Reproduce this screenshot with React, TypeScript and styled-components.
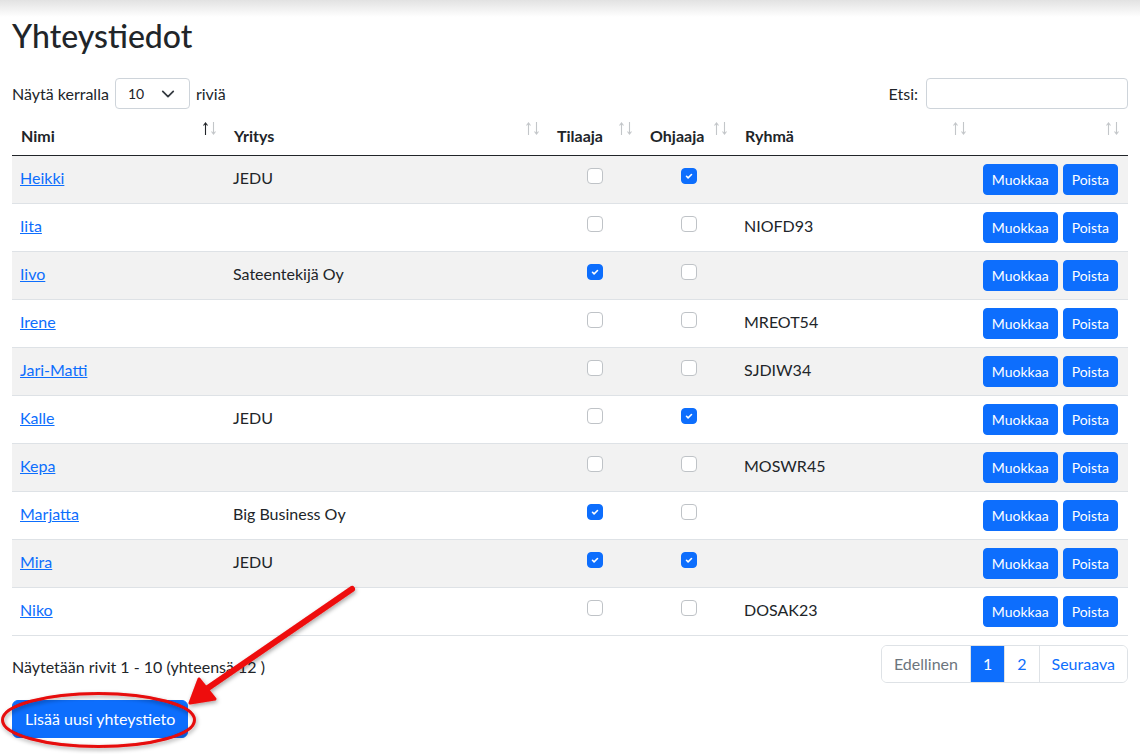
import React from "react";
import styled, { createGlobalStyle } from "styled-components";

const Global = createGlobalStyle`
  html, body { margin: 0; padding: 0; background: #fff; }
  body {
    font-family: "Lato", "Liberation Sans", sans-serif;
    color: #212529;
    font-size: 16px;
    line-height: 1.5;
  }
  * { box-sizing: border-box; }
`;

const Page = styled.div`
  position: relative;
  width: 1140px;
  min-height: 754px;
  overflow: hidden;
`;

const TopShade = styled.div`
  height: 17px;
  background: linear-gradient(#e2e2e2, #ffffff);
`;

const Container = styled.div`
  padding: 0 12px;
`;

const Title = styled.h2`
  margin: 0 0 23px;
  font-size: 32px;
  font-weight: 500;
  line-height: 38px;
`;

const Controls = styled.div`
  display: flex;
  justify-content: space-between;
  align-items: center;
  height: 31px;
  margin-bottom: 7px;
`;

const Label = styled.label`
  display: flex;
  align-items: center;
  gap: 6px;
  font-size: 16px;
`;

const SelectBox = styled.div`
  width: 75px;
  height: 31px;
  border: 1px solid #ced4da;
  border-radius: 4px;
  display: flex;
  align-items: center;
  justify-content: space-between;
  padding: 0 14px 0 12px;
  font-size: 14px;
`;

const SearchInput = styled.input`
  width: 202px;
  height: 31px;
  border: 1px solid #ced4da;
  border-radius: 4px;
  font: inherit;
  padding: 0 8px;
  margin-left: 2px;
`;

const Table = styled.table`
  width: 100%;
  border-collapse: collapse;
  table-layout: fixed;
`;

const Th = styled.th`
  position: relative;
  text-align: left;
  font-weight: 700;
  padding: 8px 8px 7px 9px;
  line-height: 24px;
  border-bottom: 1px solid #212529;
`;

const SortIcon = styled.span`
  position: absolute;
  right: 9px;
  top: 6px;
  display: flex;
  gap: 3px;
`;

const Tr = styled.tr<{ $striped: boolean }>`
  background: ${(p) => (p.$striped ? "#f2f2f2" : "#fff")};
`;

const Td = styled.td<{ $center?: boolean }>`
  padding: ${(p) => (p.$center ? "8px" : "10px 8px 8px")};
  line-height: 24px;
  vertical-align: top;
  border-bottom: 1px solid #dee2e6;
  text-align: ${(p) => (p.$center ? "center" : "left")};
`;

const ActionTd = styled.td`
  padding: 8px;
  vertical-align: top;
  border-bottom: 1px solid #dee2e6;
`;

const NameLink = styled.a`
  color: #0d6efd;
  text-decoration: underline;
  cursor: pointer;
`;

const CheckBox = styled.span<{ $checked: boolean }>`
  display: inline-flex;
  align-items: center;
  justify-content: center;
  width: 16px;
  height: 16px;
  margin-top: 4px;
  vertical-align: top;
  border-radius: 4px;
  border: 1px solid ${(p) => (p.$checked ? "#0d6efd" : "#bfc3c7")};
  background: ${(p) => (p.$checked ? "#0d6efd" : "#fff")};
`;

const Actions = styled.div`
  display: flex;
  justify-content: flex-end;
  gap: 5px;
  padding-right: 2px;
`;

const SmallButton = styled.button`
  height: 31px;
  padding: 0 8px;
  font: inherit;
  font-size: 14px;
  color: #fff;
  background: #0d6efd;
  border: 1px solid #0d6efd;
  border-radius: 4px;
`;

const Footer = styled.div`
  display: flex;
  justify-content: space-between;
  align-items: center;
  margin-top: 9px;
`;

const Info = styled.div`
  font-size: 16px;
  padding-top: 6px;
`;

const Pagination = styled.div`
  display: flex;
  height: 38px;
  border: 1px solid #dee2e6;
  border-radius: 6px;
  overflow: hidden;
`;

const PageItem = styled.span<{ $active?: boolean; $disabled?: boolean }>`
  display: flex;
  align-items: center;
  padding: 0 12px;
  font-size: 16px;
  color: ${(p) => (p.$active ? "#fff" : p.$disabled ? "#6c757d" : "#0d6efd")};
  background: ${(p) => (p.$active ? "#0d6efd" : "#fff")};
  & + & {
    border-left: 1px solid #dee2e6;
  }
`;

const AddButton = styled.button`
  margin-top: 17px;
  height: 38px;
  padding: 0 12px;
  font: inherit;
  font-size: 16px;
  color: #fff;
  background: #0d6efd;
  border: 1px solid #0d6efd;
  border-radius: 6px;
`;

const Overlay = styled.svg`
  position: absolute;
  left: 0;
  top: 0;
  pointer-events: none;
`;

type Row = { name: string; company: string; sub: boolean; guide: boolean; group: string };

const rows: Row[] = [
  { name: "Heikki", company: "JEDU", sub: false, guide: true, group: "" },
  { name: "Iita", company: "", sub: false, guide: false, group: "NIOFD93" },
  { name: "Iivo", company: "Sateentekijä Oy", sub: true, guide: false, group: "" },
  { name: "Irene", company: "", sub: false, guide: false, group: "MREOT54" },
  { name: "Jari-Matti", company: "", sub: false, guide: false, group: "SJDIW34" },
  { name: "Kalle", company: "JEDU", sub: false, guide: true, group: "" },
  { name: "Kepa", company: "", sub: false, guide: false, group: "MOSWR45" },
  { name: "Marjatta", company: "Big Business Oy", sub: true, guide: false, group: "" },
  { name: "Mira", company: "JEDU", sub: true, guide: true, group: "" },
  { name: "Niko", company: "", sub: false, guide: false, group: "DOSAK23" },
];

const Check = ({ checked }: { checked: boolean }) => (
  <CheckBox $checked={checked}>
    {checked && (
      <svg width="10" height="10" viewBox="0 0 20 20">
        <path d="M5 10.5l3.2 3.2L15 7" fill="none" stroke="#fff" strokeWidth="3.2" strokeLinecap="round" strokeLinejoin="round" />
      </svg>
    )}
  </CheckBox>
);

const Sort = ({ active }: { active?: boolean }) => (
  <SortIcon>
    <svg width="5" height="13" viewBox="0 0 5 13">
      <path d="M2.5 1v12M0.5 3.5L2.5 1l2 2.5" fill="none" stroke={active ? "#212529" : "#c3c6c9"} strokeWidth="1.1" />
    </svg>
    <svg width="5" height="13" viewBox="0 0 5 13">
      <path d="M2.5 0v12M0.5 9.5L2.5 12l2-2.5" fill="none" stroke="#c3c6c9" strokeWidth="1.1" />
    </svg>
  </SortIcon>
);

const headers = [
  { label: "Nimi", w: 213, active: true },
  { label: "Yritys", w: 323 },
  { label: "Tilaaja", w: 93 },
  { label: "Ohjaaja", w: 95 },
  { label: "Ryhmä", w: 239 },
  { label: "", w: 153 },
];

export default function App() {
  return (
    <Page>
      <Global />
      <TopShade />
      <Container>
        <Title>Yhteystiedot</Title>
        <Controls>
          <Label>
            Näytä kerralla
            <SelectBox>
              <span>10</span>
              <svg width="14" height="14" viewBox="0 0 16 16">
                <path d="M2 5l6 6 6-6" fill="none" stroke="#343a40" strokeWidth="2" strokeLinecap="round" strokeLinejoin="round" />
              </svg>
            </SelectBox>
            riviä
          </Label>
          <Label>
            Etsi:
            <SearchInput />
          </Label>
        </Controls>
        <Table>
          <colgroup>
            {headers.map((h, i) => (
              <col key={i} style={{ width: h.w }} />
            ))}
          </colgroup>
          <thead>
            <tr>
              {headers.map((h, i) => (
                <Th key={i}>
                  {h.label}
                  <Sort active={h.active} />
                </Th>
              ))}
            </tr>
          </thead>
          <tbody>
            {rows.map((r, i) => (
              <Tr key={r.name} $striped={i % 2 === 0}>
                <Td>
                  <NameLink>{r.name}</NameLink>
                </Td>
                <Td>{r.company}</Td>
                <Td $center>
                  <Check checked={r.sub} />
                </Td>
                <Td $center>
                  <Check checked={r.guide} />
                </Td>
                <Td>{r.group}</Td>
                <ActionTd>
                  <Actions>
                    <SmallButton>Muokkaa</SmallButton>
                    <SmallButton>Poista</SmallButton>
                  </Actions>
                </ActionTd>
              </Tr>
            ))}
          </tbody>
        </Table>
        <Footer>
          <Info>Näytetään rivit 1 - 10 (yhteensä 12 )</Info>
          <Pagination>
            <PageItem $disabled>Edellinen</PageItem>
            <PageItem $active>1</PageItem>
            <PageItem>2</PageItem>
            <PageItem>Seuraava</PageItem>
          </Pagination>
        </Footer>
        <AddButton>Lisää uusi yhteystieto</AddButton>
      </Container>
      <Overlay width="1140" height="754" viewBox="0 0 1140 754">
        <defs>
          <filter id="sh" x="-20%" y="-20%" width="140%" height="140%">
            <feDropShadow dx="1" dy="2" stdDeviation="2" floodColor="#000" floodOpacity="0.35" />
          </filter>
        </defs>
        <g filter="url(#sh)">
          <ellipse cx="98.5" cy="720" rx="96" ry="26.5" fill="none" stroke="#e60808" strokeWidth="3" />
          <line x1="352" y1="589" x2="205" y2="690" stroke="#ee0a0a" strokeWidth="6" strokeLinecap="round" />
          <path d="M190 703 L199 679 L215 699 Z" fill="#ee0a0a" stroke="#ee0a0a" strokeWidth="3" strokeLinejoin="round" />
        </g>
      </Overlay>
    </Page>
  );
}
